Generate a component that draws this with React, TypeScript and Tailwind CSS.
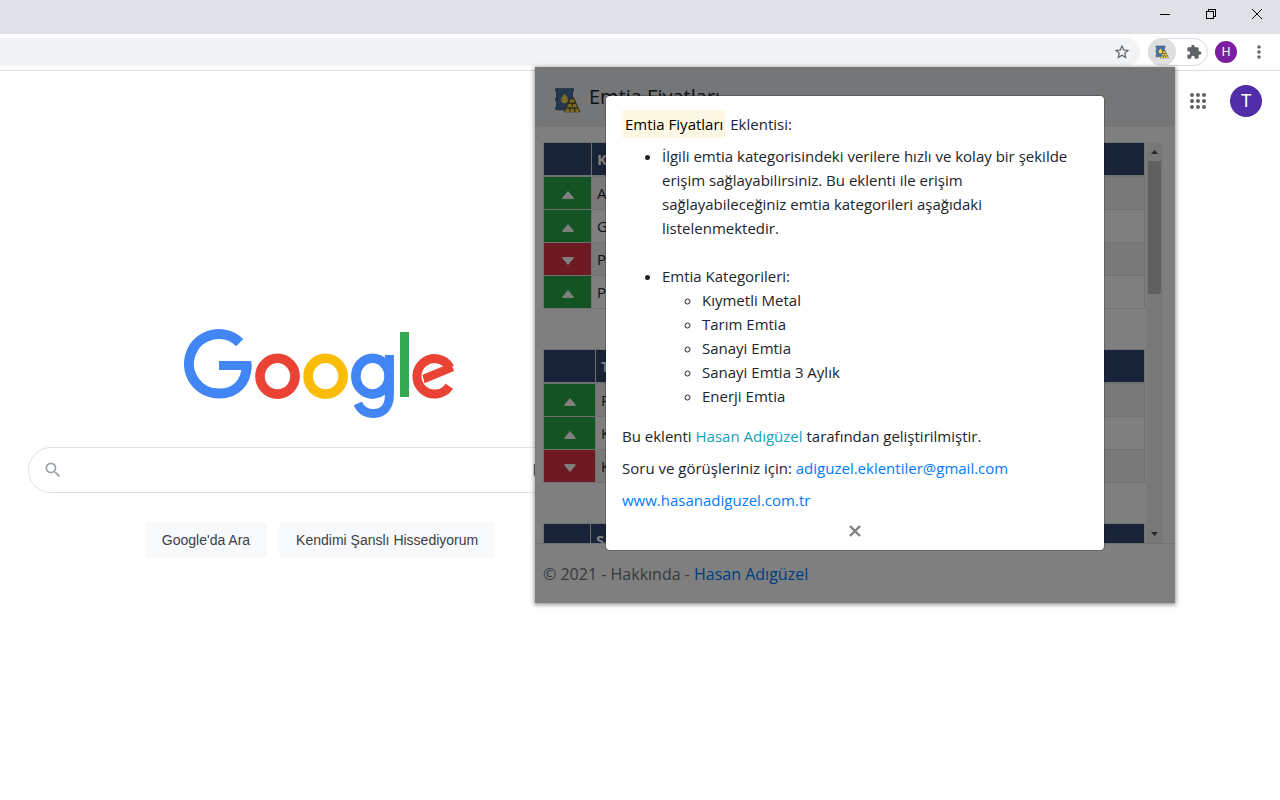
import { useState } from 'react'
import { MdExtension, MdKeyboard, MdMoreVert, MdSearch, MdStarBorder } from 'react-icons/md'

type Row = { name: string; up: boolean }
type Category = { title: string; iconCol: string; rows: Row[] }

const categories: Category[] = [
    {
        title: 'Kıymetli Metal',
        iconCol: 'w-[48px]',
        rows: [
            { name: 'Altın', up: true },
            { name: 'Gümüş', up: true },
            { name: 'Platin', up: false },
            { name: 'Paladyum', up: true },
        ],
    },
    {
        title: 'Tarım Emtia',
        iconCol: 'w-[52px]',
        rows: [
            { name: 'Pamuk', up: true },
            { name: 'Kahve', up: true },
            { name: 'Kakao', up: false },
        ],
    },
    {
        title: 'Sanayi Emtia',
        iconCol: 'w-[47px]',
        rows: [{ name: 'Bakır', up: true }],
    },
]

const categoryNames = ['Kıymetli Metal', 'Tarım Emtia', 'Sanayi Emtia', 'Sanayi Emtia 3 Aylık', 'Enerji Emtia']

const BarrelIcon = ({ className }: { className: string }) => (
    <svg viewBox="0 0 32 32" className={className} aria-hidden="true">
        <path d="M2 2h21v3h-1v8h1v3h-1v8h1v3H2v-3h1v-8H2v-3h1V5H2z" fill="#47719f" stroke="#34516f" strokeWidth="1" />
        <path d="M12.500 8c2.500 3.200 4 5 4 7.200a4 4 0 0 1-8 0C8.500 13 10 11.200 12.500 8z" fill="#f5d84a" />
        <path d="M18.500 13h5.500l7.500 17H11.500z" fill="#5f5a35" />
        <g fill="#f0d44a">
            <path d="M19.500 14.500h3.600l1.600 4h-6.800z" />
            <path d="M17 20h3.600l1.200 4h-6.400zM22.600 20h3.400l1.600 4h-5.600z" />
            <path d="M14.500 25.500h3.200l.8 4h-5.500zM20 25.500h3.200l1 4h-5zM25.300 25.500h3l1.700 4h-4.500z" />
        </g>
    </svg>
)

const GoogleLogo = () => (
    <svg viewBox="14 18 272 92" className="h-[92px] w-[272px]" fill="none" role="img" aria-label="Google">
        <path d="M69.700 32.600A29.800 29.800 0 1 0 49 83.600C66 83.600 77.200 72 76.500 54" stroke="#4285f4" strokeWidth="10" />
        <path d="M49 55.500H81.400" stroke="#4285f4" strokeWidth="9" />
        <ellipse cx="107.500" cy="66.200" rx="17.500" ry="17.900" stroke="#ea4335" strokeWidth="9.600" />
        <ellipse cx="155.600" cy="66.200" rx="17.500" ry="17.900" stroke="#fbbc05" strokeWidth="9.600" />
        <ellipse cx="202.500" cy="66.200" rx="16.600" ry="17.900" stroke="#4285f4" strokeWidth="9.600" />
        <path d="M219.400 45V85C219.400 97 213 103.500 203.500 103.500C196 103.500 190.500 99.500 187.800 93.500" stroke="#4285f4" strokeWidth="9" />
        <path d="M234.500 22V87" stroke="#34a853" strokeWidth="9" />
        <path d="M279.300 76.200A17.700 17.700 0 1 1 280 57.600" stroke="#ea4335" strokeWidth="9" />
        <path d="M252.500 64.800L277 54.700L281.800 55L284 61L254.500 73.200Z" fill="#ea4335" />
    </svg>
)

const AppsIcon = () => (
    <svg viewBox="0 0 24 24" className="size-6" fill="currentColor" aria-hidden="true">
        {[6, 12, 18].map((cy) => [6, 12, 18].map((cx) => <circle key={`${cx}-${cy}`} cx={cx} cy={cy} r="2" />))}
    </svg>
)

const Triangle = ({ up }: { up: boolean }) => (
    <svg viewBox="0 0 12 8" className="mx-auto mt-1 h-2 w-3" aria-hidden="true">
        <path d={up ? 'M6 0L11.500 6.500Q12 8 11 8H1Q0 8 .5 6.500Z' : 'M6 8L.5 1.500Q0 0 1 0H11Q12 0 11.500 1.500Z'} fill="#fff" />
    </svg>
)

const CategoryTable = ({ category }: { category: Category }) => (
    <table className="mb-10 w-full table-fixed border-collapse border border-[#dee2e6] text-left">
        <thead>
            <tr className="bg-[#31466f] text-white">
                <th className={`${category.iconCol} h-8 border border-b-2 border-[#dee2e6]`} aria-label="Yön" />
                <th className="border-b-2 border-[#dee2e6] px-[5px] py-1 leading-6 font-bold">{category.title}</th>
            </tr>
        </thead>
        <tbody>
            {category.rows.map((row) => (
                <tr key={row.name} className="odd:bg-[#f2f2f2]">
                    <td className={`border border-[#dee2e6] ${row.up ? 'bg-[#28a745]' : 'bg-[#dc3545]'}`}>
                        <Triangle up={row.up} />
                    </td>
                    <td className="border border-[#dee2e6] px-[5px] py-1 leading-6">{row.name}</td>
                </tr>
            ))}
        </tbody>
    </table>
)

const BrowserBar = () => (
    <header>
        <div className="flex h-[34px] justify-end bg-[#dee1e6] pb-1.5 text-black">
            <button type="button" aria-label="Küçült" className="flex w-[46px] items-center justify-center">
                <svg viewBox="0 0 10 10" className="size-2.5" shapeRendering="crispEdges">
                    <path d="M0 5.500H10" stroke="currentColor" />
                </svg>
            </button>
            <button type="button" aria-label="Geri yükle" className="flex w-[46px] items-center justify-center">
                <svg viewBox="0 0 10 10" className="size-2.5" fill="none" stroke="currentColor" shapeRendering="crispEdges">
                    <path d="M.5 2.500H7.500V9.500H.5ZM2.500 2.500V.5H9.500V7.500H7.500" />
                </svg>
            </button>
            <button type="button" aria-label="Kapat" className="flex w-[46px] items-center justify-center">
                <svg viewBox="0 0 10 10" className="size-2.5" stroke="currentColor">
                    <path d="M0 0L10 10M10 0L0 10" />
                </svg>
            </button>
        </div>
        <div className="flex h-[37px] items-center border-b border-[#dadce0] pr-[11px] text-[#5f6368]">
            <div className="flex h-7 flex-1 items-center justify-end rounded-r-full bg-[#f1f3f4] pr-[9px]">
                <button type="button" aria-label="Yer işareti ekle">
                    <MdStarBorder size={18} />
                </button>
            </div>
            <div className="ml-2 flex h-7 w-[60px] items-center justify-between rounded-full border border-[#dadce0] pr-[5px]">
                <button type="button" aria-label="Emtia Fiyatları" className="flex size-7 -ml-px items-center justify-center rounded-full bg-[#dfdfdf]">
                    <BarrelIcon className="size-3.5" />
                </button>
                <button type="button" aria-label="Uzantılar">
                    <MdExtension size={16} />
                </button>
            </div>
            <button type="button" className="ml-[7px] size-[22px] rounded-full bg-[#7b1fa2] text-xs text-white">
                H
            </button>
            <button type="button" aria-label="Menü" className="ml-3 flex w-5 justify-center">
                <MdMoreVert size={20} />
            </button>
        </div>
    </header>
)

const AboutDialog = ({ onClose }: { onClose: () => void }) => (
    <div className="absolute inset-0 flex items-start justify-center bg-black/50 pt-7">
        <div role="dialog" aria-label="Hakkında" className="w-[500px] rounded-[5px] border border-black/20 bg-white bg-clip-padding px-4 pt-4 pb-2">
            <p className="mb-2">
                <mark className="bg-[#fcf8e3] px-[3px] py-1 text-black">Emtia Fiyatları</mark> Eklentisi:
            </p>
            <ul className="mb-4 list-disc pl-10">
                <li className="mb-6">
                    İlgili emtia kategorisindeki verilere hızlı ve kolay bir şekilde erişim sağlayabilirsiniz. Bu eklenti ile
                    erişim sağlayabileceğiniz emtia kategorileri aşağıdaki listelenmektedir.
                </li>
                <li>
                    Emtia Kategorileri:
                    <ul className="list-[circle] pl-10">
                        {categoryNames.map((name) => (
                            <li key={name}>{name}</li>
                        ))}
                    </ul>
                </li>
            </ul>
            <p className="mb-2">
                Bu eklenti <span className="text-[#17a2b8]">Hasan Adıgüzel</span> tarafından geliştirilmiştir.
            </p>
            <p className="mb-2">
                Soru ve görüşleriniz için:{' '}
                <a href="mailto:adiguzel.eklentiler@gmail.com" className="text-[#007bff]">adiguzel.eklentiler@gmail.com</a>
            </p>
            <p className="mb-2">
                <a href="#site" className="text-[#007bff]">www.hasanadiguzel.com.tr</a>
            </p>
            <button type="button" onClick={onClose} aria-label="Kapat" className="mx-auto flex h-[22px] w-6 items-center justify-center text-[#7f7f7f]">
                <svg viewBox="0 0 12 12" className="size-3" stroke="currentColor" strokeWidth="2.400">
                    <path d="M1 1L11 11M11 1L1 11" />
                </svg>
            </button>
        </div>
    </div>
)

const ExtensionPopup = () => {
    const [aboutOpen, setAboutOpen] = useState(true)

    return (
        <section className="absolute top-[67px] right-[105px] w-[640px] bg-white font-['Open_Sans','Noto_Sans',sans-serif] text-[15px] leading-6 text-[#212529] shadow-[0_1px_4px_1px_rgba(0,0,0,0.4)]">
            <div className="flex h-[60px] items-center gap-2 rounded-b-[5px] bg-[#e9ecef] pr-5 pl-[19px]">
                <BarrelIcon className="mt-1.5 size-[27px]" />
                <h1 className="text-xl">Emtia Fiyatları</h1>
            </div>
            <div className="mt-[15px] flex h-[401px] gap-px overflow-hidden pr-3 pl-2">
                <div className="flex-1">
                    {categories.map((category) => (
                        <CategoryTable key={category.title} category={category} />
                    ))}
                </div>
                <div className="mt-px flex w-[17px] flex-col items-center justify-between bg-[#f1f1f1] py-[7px]">
                    <div className="flex flex-col items-center gap-[7px]">
                        <svg viewBox="0 0 7 4" className="h-1 w-[7px]"><path d="M0 4L3.500 0L7 4Z" fill="#505050" /></svg>
                        <div className="h-[133px] w-[13px] bg-[#c1c1c1]" />
                    </div>
                    <svg viewBox="0 0 7 4" className="h-1 w-[7px]"><path d="M0 0H7L3.500 4Z" fill="#505050" /></svg>
                </div>
            </div>
            <footer className="flex h-[60px] items-center border-t border-[#dee2e6] px-2 text-base text-[#6c757d]">
                <p>
                    © 2021 -{' '}
                    <button type="button" onClick={() => setAboutOpen(true)}>Hakkında</button> -{' '}
                    <a href="#hasan" className="text-[#007bff]">Hasan Adıgüzel</a>
                </p>
            </footer>
            {aboutOpen && <AboutDialog onClose={() => setAboutOpen(false)} />}
        </section>
    )
}

const App = () => {
    return (
        <div className="relative min-h-screen bg-white font-['Liberation_Sans',Arial,sans-serif]">
            <BrowserBar />
            <div className="flex items-start">
                <main className="flex w-1/2 flex-col items-center pt-[257px]">
                    <GoogleLogo />
                    <form className="mt-[27px] w-full px-7" onSubmit={(e) => e.preventDefault()}>
                        <div className="flex h-[46px] items-center gap-3 rounded-full border border-[#dfe1e5] pr-[57px] pl-3.5 text-[#9aa0a6]">
                            <MdSearch size={20} />
                            <input type="text" aria-label="Ara" className="min-w-0 flex-1 outline-0" />
                            <MdKeyboard size={22} className="text-[#5f6368]" />
                        </div>
                        <div className="mt-[29px] flex justify-center gap-3 text-sm text-[#3c4043]">
                            <button type="submit" className="h-9 rounded border border-[#f8f9fa] bg-[#f8f9fa] px-4">
                                Google'da Ara
                            </button>
                            <button type="button" className="h-9 rounded border border-[#f8f9fa] bg-[#f8f9fa] px-4">
                                Kendimi Şanslı Hissediyorum
                            </button>
                        </div>
                    </form>
                </main>
                <nav className="ml-auto flex items-center gap-5 pt-3.5 pr-[18px]">
                    <button type="button" aria-label="Google uygulamaları" className="text-[#5f6368]">
                        <AppsIcon />
                    </button>
                    <button type="button" className="size-8 rounded-full bg-[#512da8] font-['Roboto',sans-serif] text-lg text-white">
                        T
                    </button>
                </nav>
            </div>
            <ExtensionPopup />
        </div>
    )
}

export default App
